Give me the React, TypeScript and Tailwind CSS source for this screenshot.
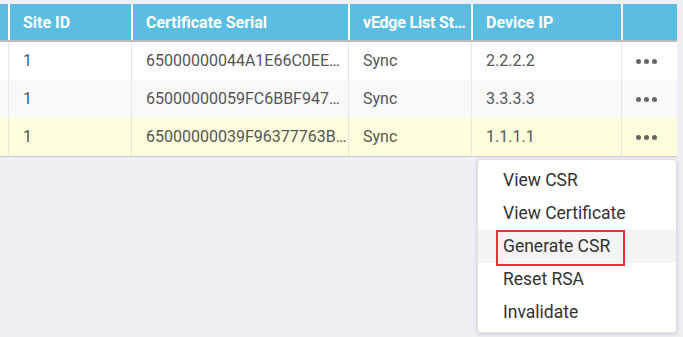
import React from "react";

const rows = [
  { site: "1", serial: "65000000044A1E66C0EE3D2A1B", status: "Sync", ip: "2.2.2.2", bg: "bg-white" },
  { site: "1", serial: "65000000059FC6BBF947A3C21D", status: "Sync", ip: "3.3.3.3", bg: "bg-[#f9f9fa]" },
  { site: "1", serial: "65000000039F96377763BE52F0", status: "Sync", ip: "1.1.1.1", bg: "bg-[#fffedd]" },
];

const menuItems = ["View CSR", "View Certificate", "Generate CSR", "Reset RSA", "Invalidate"];

function Dots() {
  return (
    <div className="flex items-center gap-[3px]">
      <span className="w-[5px] h-[5px] rounded-full bg-[#666]" />
      <span className="w-[5px] h-[5px] rounded-full bg-[#666]" />
      <span className="w-[5px] h-[5px] rounded-full bg-[#666]" />
    </div>
  );
}

export default function App() {
  const cols = "grid grid-cols-[8px_123px_217px_123px_150px_56px]";
  return (
    <div
      className="relative w-[683px] h-[337px] bg-[#eef0f5] overflow-hidden pt-[4px]"
      style={{ fontFamily: "Roboto, 'Liberation Sans', sans-serif" }}
    >
      <div className="w-[677px] bg-white border-b border-[#c9c9cc]">
        {/* header */}
        <div className={`${cols} h-[38px] bg-[#5bbde0] border-b-2 border-[#b9bcc4] text-white text-[16px] font-bold`}>
          <div />
          <div className="border-l-2 border-white flex items-center pl-[13px] pt-[2px]">Site ID</div>
          <div className="border-l-2 border-white flex items-center pl-[13px] pt-[2px]">Certificate Serial</div>
          <div className="border-l-2 border-white flex items-center pl-[13px] pt-[2px] min-w-0 overflow-hidden">
            <span className="truncate tracking-[-0.2px]">vEdge List Status</span>
          </div>
          <div className="border-l-2 border-white flex items-center pl-[13px] pt-[2px]">Device IP</div>
          <div className="border-l-2 border-white" />
        </div>
        {/* body */}
        {rows.map((r, i) => (
          <div key={i} className={`${cols} h-[38px] ${r.bg} text-[16px] text-[#555]`}>
            <div />
            <div className="border-l border-[#e6e6e6] flex items-center pl-[14px]">{r.site}</div>
            <div className="border-l border-[#e6e6e6] flex items-center pl-[14px] min-w-0 overflow-hidden">
              <span className="truncate">{r.serial}</span>
            </div>
            <div className="border-l border-[#e6e6e6] flex items-center pl-[14px]">{r.status}</div>
            <div className="border-l border-[#e6e6e6] flex items-center pl-[14px]">{r.ip}</div>
            <div className="border-l border-[#e6e6e6] flex items-center pl-[14px]">
              <Dots />
            </div>
          </div>
        ))}
      </div>

      {/* context menu */}
      <div className="absolute left-[477px] top-[159px] w-[200px] h-[174px] bg-white rounded-[4px] border border-[#e2e2e2] shadow-[0_1px_4px_rgba(0,0,0,0.15)] py-[4px]">
        {menuItems.map((m) => (
          <div
            key={m}
            className={`h-[33px] flex items-center pl-[25px] text-[17.5px] text-[#333] ${
              m === "Generate CSR" ? "bg-[#f4f4f4]" : ""
            }`}
          >
            {m}
          </div>
        ))}
      </div>

      {/* annotation highlight */}
      <div className="absolute left-[496px] top-[230px] w-[129px] h-[36px] border-2 border-[#ec3038]" />
    </div>
  );
}
